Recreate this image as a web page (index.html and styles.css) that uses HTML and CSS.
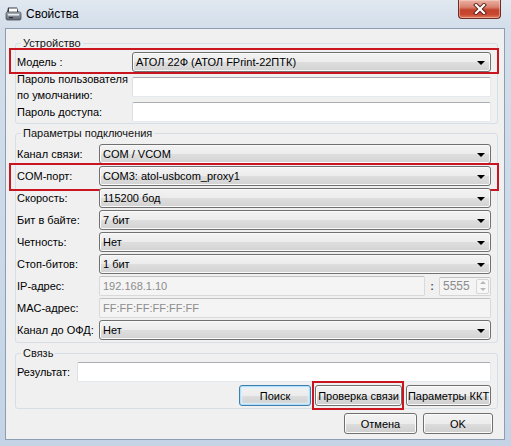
FILE: index.html
```html
<!DOCTYPE html>
<html lang="ru">
<head>
<meta charset="utf-8">
<title>Свойства</title>
<link rel="stylesheet" href="styles.css">
</head>
<body>
<div class="window">
  <div class="titlebar">
    <svg class="app-icon" width="17" height="16" viewBox="0 0 17 16">
      <defs>
        <linearGradient id="bodyg" x1="0" y1="0" x2="0" y2="1">
          <stop offset="0" stop-color="#a9b0ba"/>
          <stop offset="1" stop-color="#5d646e"/>
        </linearGradient>
      </defs>
      <path d="M3 1.5 L12 1.5 L13.5 6 L2 6 Z" fill="#3a3f47"/>
      <rect x="4" y="2.5" width="8" height="4" fill="#ffffff"/>
      <rect x="1" y="6" width="15" height="8" rx="1.5" fill="url(#bodyg)" stroke="#4a5058" stroke-width="0.8"/>
      <rect x="3" y="8" width="11" height="1.5" fill="#e9ecef"/>
      <rect x="4" y="11" width="4" height="1.2" fill="#2c3036"/>
    </svg>
    <span class="title">Свойства</span>
    <div class="close">
      <svg width="14" height="12" viewBox="0 0 14 12">
        <path d="M3 2 L11 10 M11 2 L3 10" stroke="#5a2018" stroke-width="4" stroke-linecap="square" fill="none"/>
        <path d="M3 2 L11 10 M11 2 L3 10" stroke="#ffffff" stroke-width="2.2" stroke-linecap="square" fill="none"/>
      </svg>
    </div>
  </div>

  <div class="client">
    <fieldset class="group g1">
      <legend>Устройство</legend>
      <div class="rows">
        <div class="row hl hl-model">
          <span class="lbl">Модель :</span>
          <div class="combo"><span class="val">АТОЛ 22Ф (АТОЛ FPrint-22ПТК)</span><span class="arrow"></span></div>
        </div>
        <div class="row">
          <span class="lbl two">Пароль пользователя<br>по умолчанию:</span>
          <div class="input"></div>
        </div>
        <div class="row">
          <span class="lbl">Пароль доступа:</span>
          <div class="input"></div>
        </div>
      </div>
    </fieldset>

    <fieldset class="group g2">
      <legend>Параметры подключения</legend>
      <div class="rows">
        <div class="row">
          <span class="lbl">Канал связи:</span>
          <div class="combo"><span class="val">COM / VCOM</span><span class="arrow"></span></div>
        </div>
        <div class="row hl hl-com">
          <span class="lbl">COM-порт:</span>
          <div class="combo"><span class="val">COM3: atol-usbcom_proxy1</span><span class="arrow"></span></div>
        </div>
        <div class="row">
          <span class="lbl">Скорость:</span>
          <div class="combo"><span class="val">115200 бод</span><span class="arrow"></span></div>
        </div>
        <div class="row">
          <span class="lbl">Бит в байте:</span>
          <div class="combo"><span class="val">7 бит</span><span class="arrow"></span></div>
        </div>
        <div class="row">
          <span class="lbl">Четность:</span>
          <div class="combo"><span class="val">Нет</span><span class="arrow"></span></div>
        </div>
        <div class="row">
          <span class="lbl">Стоп-битов:</span>
          <div class="combo"><span class="val">1 бит</span><span class="arrow"></span></div>
        </div>
        <div class="row">
          <span class="lbl">IP-адрес:</span>
          <div class="input disabled"><span class="val">192.168.1.10</span></div>
          <span class="colon">:</span>
          <div class="spin">
            <span class="val">5555</span>
            <span class="spin-btns">
              <span class="up"></span>
              <span class="down"></span>
            </span>
          </div>
        </div>
        <div class="row">
          <span class="lbl">MAC-адрес:</span>
          <div class="input disabled"><span class="val">FF:FF:FF:FF:FF:FF</span></div>
        </div>
        <div class="row">
          <span class="lbl">Канал до ОФД:</span>
          <div class="combo"><span class="val">Нет</span><span class="arrow"></span></div>
        </div>
      </div>
    </fieldset>

    <fieldset class="group g3">
      <legend>Связь</legend>
      <div class="rows">
        <div class="row">
          <span class="lbl">Результат:</span>
          <div class="input"></div>
        </div>
        <div class="btn-row">
          <div class="btn default w-search">Поиск</div>
          <div class="btn w-check hl hl-check">Проверка связи</div>
          <div class="btn w-params">Параметры ККТ</div>
        </div>
      </div>
    </fieldset>

    <div class="dialog-btns">
      <div class="btn w-cancel">Отмена</div>
      <div class="btn w-ok">OK</div>
    </div>
  </div>
</div>
</body>
</html>
```

FILE: styles.css
```css
* { box-sizing: border-box; }

html, body {
  margin: 0;
  padding: 0;
}

body {
  width: 511px;
  height: 446px;
  overflow: hidden;
  font-family: "Liberation Sans", Arial, sans-serif;
  font-size: 11px;
  color: #000;
  background: #c6d5e6;
}

.window {
  width: 511px;
  height: 446px;
  display: flex;
  flex-direction: column;
  background: linear-gradient(to bottom, #e1e8f0 0px, #d3deea 28px, #c4d4e6 100%);
}

/* Title bar */
.titlebar {
  flex: none;
  height: 28px;
  display: flex;
  align-items: flex-start;
}

.app-icon {
  margin: 6px 0 0 5px;
  flex: none;
}

.title {
  margin: 6px 0 0 4px;
  font-size: 12px;
  line-height: 16px;
  color: #000;
}

.close {
  margin-left: auto;
  margin-right: 10px;
  width: 43px;
  height: 19px;
  border: 1px solid #6e2c22;
  border-top: none;
  border-radius: 0 0 4px 4px;
  background: linear-gradient(to bottom, #eab3a6 0%, #d9806e 40%, #c2432c 55%, #c9482f 80%, #de7a5e 100%);
  box-shadow: inset 0 0 0 1px rgba(255, 220, 210, 0.45);
  display: flex;
  align-items: center;
  justify-content: center;
}

/* Client area */
.client {
  flex: 1;
  margin: 0 6px 6px 5px;
  border: 1px solid #8d9db2;
  background: #f0f0f0;
  display: flex;
  flex-direction: column;
  padding: 0 6px 0 9px;
}

.group {
  margin: 0;
  border: 1px solid #d5dfe5;
  border-radius: 3px;
  padding: 2px 6px 1px 1px;
  min-width: 0;
}

.group legend {
  padding: 0 2px;
  margin-left: 4px;
  line-height: 14px;
  font-size: 11px;
  color: #111;
}

.g1 { margin-top: 7px; }
.g2 { margin-top: 2px; padding-top: 3px; }
.g3 { margin-top: 3px; padding-bottom: 2px; }

.rows {
  display: flex;
  flex-direction: column;
}

.g1 .rows { gap: 5px; }
.g3 .rows { gap: 3px; }

.row {
  display: flex;
  align-items: center;
  position: relative;
}

.g1 .row { height: 20px; }
.g2 .row { height: 22px; }
.g3 .row { height: 20px; }

.lbl {
  flex: none;
  white-space: nowrap;
  line-height: 14px;
}

.g1 .lbl { width: 115px; }
.g2 .lbl { width: 82px; }
.g3 .lbl { width: 60px; }

.lbl.two { line-height: 16px; }

/* Combo box */
.combo {
  flex: 1;
  height: 20px;
  border: 1px solid #707070;
  border-radius: 3px;
  background: linear-gradient(to bottom, #f3f3f3 0%, #ececec 50%, #dedede 52%, #d2d2d2 100%);
  box-shadow: inset 0 0 0 1px #fafafa;
  display: flex;
  align-items: center;
  padding: 0 5px 0 3px;
}

.g1 .combo { padding-left: 3px; }

.combo .val {
  flex: 1;
  line-height: 18px;
  white-space: nowrap;
}

.arrow {
  flex: none;
  width: 0;
  height: 0;
  border-left: 4px solid transparent;
  border-right: 4px solid transparent;
  border-top: 4px solid #000;
  margin-top: 1px;
}

/* Text input */
.input {
  flex: 1;
  height: 20px;
  background: #fff;
  border: 1px solid #e3e9ef;
  border-top-color: #abadb3;
  border-left-color: #dbdfe6;
  border-radius: 2px;
  display: flex;
  align-items: center;
  padding: 0 3px;
}

.g2 .input { height: 20px; }

.input.disabled {
  background: #f4f4f4;
  border-color: #d9d9d9;
  border-top-color: #c2c2c2;
}

.input .val, .spin .val {
  color: #8c8c8c;
  line-height: 18px;
  white-space: nowrap;
}

.colon {
  flex: none;
  width: 14px;
  text-align: center;
  font-weight: bold;
  color: #555;
}

.spin {
  flex: none;
  width: 52px;
  height: 19px;
  background: #f4f4f4;
  border: 1px solid #d5d5d5;
  border-top-color: #c2c2c2;
  border-radius: 2px;
  display: flex;
  align-items: center;
  padding: 0 1px 0 3px;
}

.spin .val {
  flex: 1;
  font-size: 12px;
}

.spin-btns {
  flex: none;
  width: 13px;
  height: 15px;
  border: 1px solid #d6d6d6;
  border-radius: 2px;
  background: #f7f7f7;
  display: flex;
  flex-direction: column;
  align-items: center;
  justify-content: space-around;
}

.spin-btns .up {
  width: 0;
  height: 0;
  border-left: 3px solid transparent;
  border-right: 3px solid transparent;
  border-bottom: 3px solid #b8b8b8;
}

.spin-btns .down {
  width: 0;
  height: 0;
  border-left: 3px solid transparent;
  border-right: 3px solid transparent;
  border-top: 3px solid #b8b8b8;
}

/* Buttons */
.btn-row {
  display: flex;
  justify-content: flex-end;
  gap: 4px;
}

.btn {
  position: relative;
  flex: none;
  height: 21px;
  border: 1px solid #707070;
  border-radius: 3px;
  background: linear-gradient(to bottom, #f3f3f3 0%, #ececec 50%, #dddddd 52%, #cfcfcf 100%);
  box-shadow: inset 0 0 0 1px #fbfbfb;
  display: flex;
  align-items: center;
  justify-content: center;
  line-height: 14px;
  white-space: nowrap;
}

.btn.default {
  border-color: #3c7fb1;
  box-shadow: inset 0 0 0 1px #b4e0f7, inset 0 0 2px 2px #daf0fb;
}

.w-search { width: 72px; }
.w-check { width: 87px; }
.w-params { width: 85px; }
.w-cancel { width: 73px; }
.w-ok { width: 70px; }

.dialog-btns {
  display: flex;
  justify-content: flex-end;
  gap: 6px;
  margin-top: 4px;
  margin-right: 5px;
}

/* Red annotation frames */
.hl::after {
  content: "";
  position: absolute;
  border: 2px solid #c8151f;
  pointer-events: none;
}

.hl-model::after { top: -4px; bottom: -2px; left: -8px; right: -8px; }
.hl-com::after { top: -2px; bottom: -4px; left: -8px; right: -8px; }
.hl-check::after { top: -5px; bottom: -5px; left: -4px; right: -3px; }
```
